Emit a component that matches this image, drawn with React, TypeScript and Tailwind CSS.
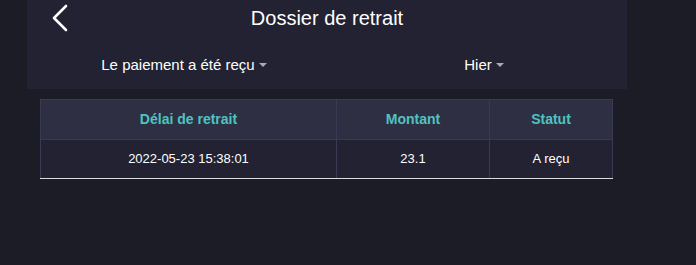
const rows = [{ date: "2022-05-23 15:38:01", amount: "23.1", status: "A reçu" }]

const Caret = () => (
  <span className="ml-[4px] mb-[2px] inline-block w-0 h-0 border-x-[4px] border-x-transparent border-t-[4px] border-t-[#a9aab4]" />
)

const Filter = ({ label }: { label: string }) => (
  <div className="flex-1 flex justify-center items-center pl-[14px]">
    <span className="text-[15px] text-white">{label}</span>
    <Caret />
  </div>
)

export default function App() {
  return (
    <div className="w-full h-[265px] bg-[#1c1c26] font-['Liberation_Sans',Arial,sans-serif] overflow-hidden">
      <div className="ml-[27px] w-[600px] h-[89px] bg-[#222232] flex flex-col">
        <div className="relative h-[35px] flex items-center justify-center">
          <button className="absolute left-[24px] top-[4px] text-white">
            <svg width="20" height="28" viewBox="0 0 20 28" fill="none">
              <polyline points="15,2 3,14 15,26" stroke="white" strokeWidth="2.6" strokeLinecap="round" strokeLinejoin="round" />
            </svg>
          </button>
          <h1 className="text-[20px] text-white leading-none">Dossier de retrait</h1>
        </div>
        <div className="flex h-[54px] pt-[7px]">
          <Filter label="Le paiement a été reçu" />
          <Filter label="Hier" />
        </div>
      </div>

      <table className="ml-[40px] mt-[10px] w-[573px] border-collapse table-fixed">
        <thead>
          <tr className="bg-[#2e2f43] h-[40px]">
            <th className="w-[296px] border border-[#393a54] text-[14px] font-bold text-[#4ec3c0]">Délai de retrait</th>
            <th className="w-[153px] border border-[#393a54] text-[14px] font-bold text-[#4ec3c0]">Montant</th>
            <th className="border border-[#393a54] text-[14px] font-bold text-[#4ec3c0]">Statut</th>
          </tr>
        </thead>
        <tbody>
          {rows.map((r) => (
            <tr key={r.date} className="bg-[#222232] h-[39px]">
              <td className="border border-[#393a54] border-b-[#d9d9e0] text-center text-[13px] text-white">{r.date}</td>
              <td className="border border-[#393a54] border-b-[#d9d9e0] text-center text-[13px] text-white">{r.amount}</td>
              <td className="border border-[#393a54] border-b-[#d9d9e0] text-center text-[13px] text-white">{r.status}</td>
            </tr>
          ))}
        </tbody>
      </table>
    </div>
  )
}
